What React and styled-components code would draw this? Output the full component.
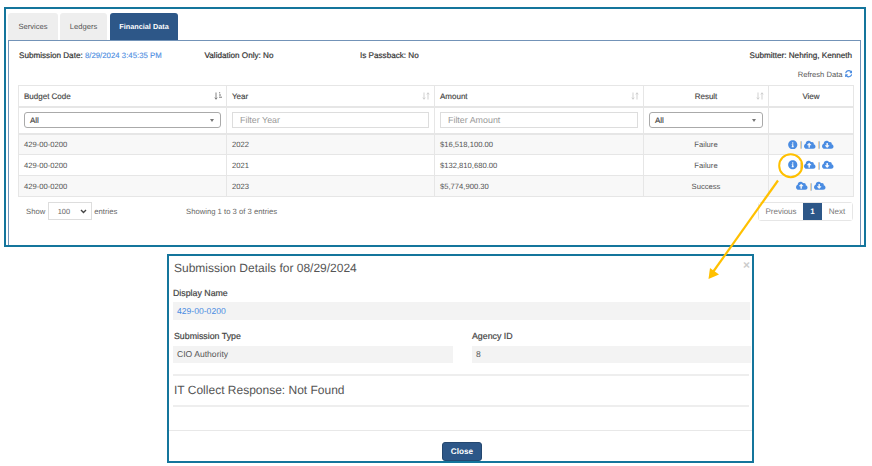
import React from "react";
import styled, { createGlobalStyle } from "styled-components";
import { FaInfoCircle, FaCloudUploadAlt, FaCloudDownloadAlt, FaSyncAlt } from "react-icons/fa";

const Global = createGlobalStyle`
  html, body { margin: 0; padding: 0; background: #fff; }
  body { font-family: "Liberation Sans", Arial, sans-serif; color: #444; width: 872px; height: 466px; overflow: hidden; text-rendering: geometricPrecision; }
  * { box-sizing: border-box; }
`;
const Page = styled.div`position: relative; width: 872px; height: 466px; padding: 7px 0 0 4px;`;
const Frame = styled.section`width: 862px; height: 240px; border: 2px solid #14759c; padding: 4px 3px 0 2px; display: flex; flex-direction: column;`;
const Tabs = styled.nav`display: flex; gap: 2px; height: 27px;`;
const Tab = styled.div`
  width: ${p => p.$w}px; margin-right: ${p => p.$mr || 0}px; border-radius: 3px 3px 0 0; display: flex; align-items: center; justify-content: center;
  font-size: ${p => p.$active ? 7.3 : 7.6}px; background: ${p => p.$active ? "#2d5788" : "#eeeeee"}; color: ${p => p.$active ? "#fff" : "#555"};
  font-weight: ${p => p.$active ? 700 : 400};
`;
const Panel = styled.div`flex: 1; border: 1px solid #7393b8; border-bottom: 0; padding: 8px 6px 0 9px; display: flex; flex-direction: column;`;
const Info = styled.div`display: grid; grid-template-columns: 185.5px 155.5px 1fr auto; padding: 0 2px 0 1px; height: 13px; align-items: center; font-size: 8.15px; color: #333;`;
const Strong = styled.div`-webkit-text-stroke: 0.2px #333;`;
const Blue = styled.span`color: #4a8ce2; -webkit-text-stroke: 0.1px #4a8ce2; font-size: 7.8px;`;
const Refresh = styled.div`display: flex; justify-content: flex-end; align-items: center; gap: 2px; height: 14px; margin-top: 5px; padding-right: 2px; font-size: 7.6px; color: #555; svg { color: #4a8ce2; font-size: 7.5px; }`;
const Table = styled.table`
  margin-top: 4px; width: 835px; table-layout: fixed; border-collapse: collapse; font-size: 7.65px; color: #555;
  td, th { border: 1px solid #e6e6e6; padding: 0 5px; text-align: left; font-weight: 400; }
`;
const HeadRow = styled.tr`height: 21.5px; th { border-bottom-width: 2px; color: #444; font-size: 8px; -webkit-text-stroke: 0.15px #444; }`;
const FilterRow = styled.tr`height: 26.5px; td { border-bottom-width: 2px; }`;
const DataRow = styled.tr`height: 21px; background: ${p => p.$odd ? "#f8f8f8" : "#fff"};`;
const HeadInner = styled.div`display: flex; align-items: center; justify-content: ${p => p.$center ? "center" : "flex-start"}; position: relative;`;
const SortIcon = styled.svg`position: absolute; right: -1px; top: 50%; transform: translateY(-50%); width: 8px; height: 8px;`;
const Centered = styled.td`text-align: center !important;`;
const DropBox = styled.div`height: 16px; border: 1px solid #aaa; border-radius: 3px; display: flex; align-items: center; justify-content: space-between; padding: 0 6px 0 5px; color: #444; font-size: 8px; -webkit-text-stroke: 0.15px #444; background: #fff;`;
const Caret = styled.i`width: 0; height: 0; border: 2px solid transparent; border-top: 3px solid #777; border-bottom: 0;`;
const FilterInput = styled.div`height: 16px; border: 1px solid #ddd; padding: 0 7px; display: flex; align-items: center; color: #999; font-size: 8.9px; background: #fff;`;
const Icons = styled.div`display: flex; align-items: center; justify-content: center; gap: 1.7px; color: #4a8ce2;`;
const Sep = styled.span`color: #666; font-size: 8px; margin: 0 0.5px;`;
const Footer = styled.div`display: flex; align-items: flex-start; margin-top: 5px; width: 835px; font-size: 7.7px; color: #666;`;
const Show = styled.div`display: flex; align-items: center; gap: 2.5px; height: 18px; width: 168px; padding-left: 8px;`;
const LenSelect = styled.div`width: 44px; height: 18px; border: 1px solid #ddd; display: flex; align-items: center; justify-content: space-between; padding: 0 4px 0 9px; font-size: 7.4px;`;
const Showing = styled.div`flex: 1; height: 18px; display: flex; align-items: center;`;
const Pager = styled.div`display: flex; height: 18.5px; border: 1px solid #e6e6e6; border-radius: 3px; align-items: stretch; font-size: 8px;`;
const PageBtn = styled.div`width: ${p => p.$w}px; display: flex; align-items: center; justify-content: center; background: ${p => p.$active ? "#2d5788" : "#fff"}; color: ${p => p.$active ? "#fff" : "#777"}; font-weight: ${p => p.$active ? 700 : 400};`;
const Modal = styled.section`position: relative; margin: 7px 0 0 163px; width: 587px; height: 209px; border: 2px solid #14759c; padding: 0 2px 0 4px; display: flex; flex-direction: column;`;
const ModalTitle = styled.h2`margin: 0; height: 25px; padding: 0 0 0 1px; display: flex; align-items: center; font-weight: 400; font-size: 12px; color: #555;`;
const Close = styled.span`position: absolute; right: 2px; top: 3px; color: #ccc; font-size: 12px; font-weight: 700; line-height: 12px;`;
const Label = styled.div`font-size: 8.8px; color: #444; -webkit-text-stroke: 0.2px #444; height: 12px; display: flex; align-items: center; padding-left: ${p => p.$pl || 0}px;`;
const Field = styled.div`height: ${p => p.$h}px; background: #f3f3f3; display: flex; align-items: center; padding-left: 4px; font-size: 8.6px; color: ${p => p.$blue ? "#4a8ce2" : "#555"};`;
const NameBlock = styled.div`margin-top: 6px; display: flex; flex-direction: column; gap: 3px;`;
const Columns = styled.div`display: grid; grid-template-columns: 280px 279px; column-gap: 19px; margin-top: 10px;`;
const Col = styled.div`display: flex; flex-direction: column; gap: 4px;`;
const Rule = styled.hr`margin: ${p => p.$mt}px 1px 0 0; border: 0; height: 2px; background: #eeeeee;`;
const Section = styled.h3`margin: 0; height: 29.5px; padding-left: 1px; display: flex; align-items: center; font-weight: 400; font-size: 12px; color: #555;`;
const ModalFoot = styled.div`margin: 23px -2px 0 -4px; border-top: 1px solid #e8e8e8; display: flex; justify-content: center; padding-top: 11px; padding-left: 3px;`;
const CloseBtn = styled.div`width: 40px; height: 19px; background: #2d5788; color: #fff; border-radius: 3px; border: 1px solid #24476f; display: flex; align-items: center; justify-content: center; font-size: 8.2px; font-weight: 700;`;
const Annotation = styled.svg`position: absolute; left: 0; top: 0; pointer-events: none;`;

const Sort = ({ active }) => (
  <SortIcon viewBox="0 0 8 8">
    <path d="M2 0.5V7M0.8 5.6L2 7.3L3.2 5.6" stroke={active ? "#777" : "#ccc"} fill="none" strokeWidth="0.9" />
    {active
      ? <path d="M5 0.8h1.2M5 3h2M5 5.2h3" stroke="#777" strokeWidth="1" />
      : <path d="M6 7.5V1M4.8 2.4L6 0.7L7.2 2.4" stroke="#ccc" fill="none" strokeWidth="0.9" />}
  </SortIcon>
);

const IconSet = ({ info }) => (
  <Icons>
    {info && <><FaInfoCircle size={9.5} /><Sep>|</Sep></>}
    <FaCloudUploadAlt size={11.5} /><Sep>|</Sep><FaCloudDownloadAlt size={11.5} />
  </Icons>
);

const rows = [
  ["2022", "$16,518,100.00", "Failure", true, true],
  ["2021", "$132,810,680.00", "Failure", true, false],
  ["2023", "$5,774,900.30", "Success", false, true],
];

export default function App() {
  return (
    <Page>
      <Global />
      <Frame>
        <Tabs>
          <Tab $w={50}>Services</Tab>
          <Tab $w={47} $mr={1}>Ledgers</Tab>
          <Tab $w={68} $active>Financial Data</Tab>
        </Tabs>
        <Panel>
          <Info>
            <Strong>Submission Date: <Blue>8/29/2024 3:45:35 PM</Blue></Strong>
            <Strong>Validation Only: No</Strong>
            <Strong>Is Passback: No</Strong>
            <Strong>Submitter: Nehring, Kenneth</Strong>
          </Info>
          <Refresh>Refresh Data <FaSyncAlt /></Refresh>
          <Table>
            <colgroup>
              <col style={{ width: 208 }} /><col style={{ width: 208 }} /><col style={{ width: 209 }} /><col style={{ width: 125 }} /><col style={{ width: 85 }} />
            </colgroup>
            <thead>
              <HeadRow>
                <th><HeadInner>Budget Code<Sort active /></HeadInner></th>
                <th><HeadInner>Year<Sort /></HeadInner></th>
                <th><HeadInner>Amount<Sort /></HeadInner></th>
                <th><HeadInner $center>Result<Sort /></HeadInner></th>
                <th><HeadInner $center>View</HeadInner></th>
              </HeadRow>
              <FilterRow>
                <td><DropBox>All<Caret /></DropBox></td>
                <td><FilterInput>Filter Year</FilterInput></td>
                <td><FilterInput>Filter Amount</FilterInput></td>
                <td><DropBox>All<Caret /></DropBox></td>
                <td />
              </FilterRow>
            </thead>
            <tbody>
              {rows.map((r, i) => (
                <DataRow key={r[0]} $odd={i !== 1}>
                  <td>429-00-0200</td>
                  <td>{r[0]}</td>
                  <td>{r[1]}</td>
                  <Centered>{r[2]}</Centered>
                  <Centered><IconSet info={r[3]} /></Centered>
                </DataRow>
              ))}
            </tbody>
          </Table>
          <Footer>
            <Show>Show <LenSelect>100<svg width="7" height="5" viewBox="0 0 7 5"><path d="M1 1l2.5 2.5L6 1" stroke="#444" strokeWidth="1.4" fill="none" /></svg></LenSelect> entries</Show>
            <Showing>Showing 1 to 3 of 3 entries</Showing>
            <Pager>
              <PageBtn $w={44}>Previous</PageBtn>
              <PageBtn $w={19} $active>1</PageBtn>
              <PageBtn $w={30}>Next</PageBtn>
            </Pager>
          </Footer>
        </Panel>
      </Frame>
      <Modal>
        <ModalTitle>Submission Details for 08/29/2024</ModalTitle>
        <Close>×</Close>
        <NameBlock>
          <Label>Display Name</Label>
          <Field $h={18} $blue>429-00-0200</Field>
        </NameBlock>
        <Columns>
          <Col><Label $pl={1}>Submission Type</Label><Field $h={17}>CIO Authority</Field></Col>
          <Col><Label>Agency ID</Label><Field $h={17}>8</Field></Col>
        </Columns>
        <Rule $mt={11} />
        <Section>IT Collect Response: Not Found</Section>
        <Rule $mt={0} />
        <ModalFoot><CloseBtn>Close</CloseBtn></ModalFoot>
      </Modal>
      <Annotation width="872" height="466" viewBox="0 0 872 466">
        <circle cx="790.7" cy="165.7" r="11.5" fill="none" stroke="#FFC000" strokeWidth="2" />
        <line x1="778" y1="180.5" x2="713" y2="272" stroke="#FFC000" strokeWidth="2.2" />
        <path d="M708.5 279L710 268L719 274.5Z" fill="#FFC000" />
      </Annotation>
    </Page>
  );
}
